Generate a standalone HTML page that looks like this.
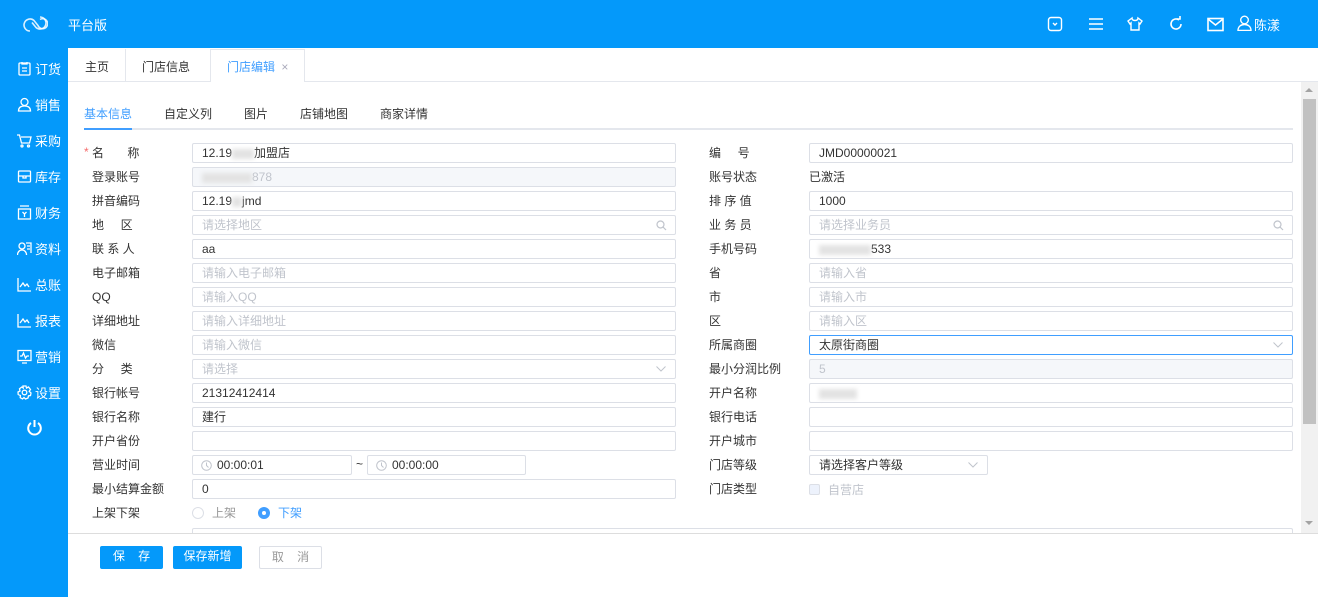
<!DOCTYPE html>
<html><head><meta charset="utf-8">
<style>
*{box-sizing:border-box;margin:0;padding:0}
body{width:1318px;height:597px;overflow:hidden;position:relative;background:#fff;font-family:"Liberation Sans","Noto Sans CJK SC",sans-serif;font-size:12px;color:#333}
.a{position:absolute}
.hdr{left:0;top:0;width:1318px;height:48px;background:#0499fa}
.side{left:0;top:48px;width:68px;height:549px;background:#0499fa}
.si{position:absolute;left:17px;color:#fff;font-size:13px;display:flex;align-items:center;gap:3px}
.si svg{width:15px;height:15px}
.lbl{position:absolute;font-size:12px;color:#333;line-height:20px}
.in{position:absolute;height:20px;border:1px solid #dcdfe6;border-radius:2px;background:#fff;padding-left:9px;line-height:18px;font-size:12px;color:#333}
.ph{color:#c0c4cc}
.dis{background:#f5f7fa;color:#c0c4cc}
.blur{display:inline-block;width:30px;height:10px;background:#e3e3e3;vertical-align:middle;filter:blur(2px)}
.btn{position:absolute;top:546px;height:23px;line-height:21px;text-align:center;border-radius:2px;font-size:12px}
.chev{position:absolute;right:9px;top:6px;width:10px;height:6px}
</style></head><body>
<div class="a hdr"></div>
<svg class="a" style="left:22px;top:14px" width="26" height="20" viewBox="0 0 26 20"><path d="M8 17a6 6 0 1 1 4-10.5l4 5a5 5 0 1 0 2-6" fill="none" stroke="#fff" stroke-width="1.6" opacity=".85"/><path d="M18 3a6 6 0 1 1-4 10.5l-4-5" fill="none" stroke="#fff" stroke-width="1.6" opacity=".85"/></svg>
<div class="a" style="left:68px;top:15px;color:#fff;font-size:13px">平台版</div>
<svg class="a" style="left:1047px;top:16px" width="16" height="16" viewBox="0 0 16 16" fill="none" stroke="#fff" stroke-width="1.4"><rect x="1.5" y="1.5" width="13" height="13" rx="2.5"/><path d="M6 7l2 2 2-2"/></svg>
<svg class="a" style="left:1088px;top:16px" width="16" height="16" viewBox="0 0 16 16" stroke="#fff" stroke-width="1.6"><path d="M1 3h14M1 8h14M1 13h14"/></svg>
<svg class="a" style="left:1127px;top:16px" width="16" height="16" viewBox="0 0 16 16" fill="none" stroke="#fff" stroke-width="1.4"><path d="M5 2L1 5l2 3 1-1v7h8V7l1 1 2-3-4-3c0 1.5-1 2.5-3 2.5S5 3.5 5 2z"/></svg>
<svg class="a" style="left:1168px;top:16px" width="16" height="16" viewBox="0 0 16 16" fill="none" stroke="#fff" stroke-width="1.6"><path d="M13 8a5 5 0 1 1-2-4"/><path d="M9 3h3V0" /></svg>
<svg class="a" style="left:1207px;top:17px" width="17" height="15" viewBox="0 0 17 15" fill="none" stroke="#fff" stroke-width="1.6"><rect x="1" y="1.5" width="15" height="12"/><path d="M1 2l7.5 6L16 2"/></svg>
<svg class="a" style="left:1237px;top:15px" width="15" height="16" viewBox="0 0 15 16" fill="none" stroke="#fff" stroke-width="1.4"><circle cx="7.5" cy="5" r="3.8"/><path d="M1 15.5c0-4 3-6 6.5-6s6.5 2 6.5 6z"/></svg>
<div class="a" style="left:1254px;top:15px;color:#fff;font-size:13px">陈漾</div>

<div class="a side"></div>
<div class="si" style="top:59px"><svg viewBox="0 0 15 15" fill="none" stroke="#fff" stroke-width="1.3"><rect x="2" y="2" width="11" height="12" rx="1"/><path d="M5 1v2h5V1M5 7h5M5 10h5"/></svg>订货</div>
<div class="si" style="top:95px"><svg viewBox="0 0 15 15" fill="none" stroke="#fff" stroke-width="1.3"><circle cx="7.5" cy="5" r="3.5"/><path d="M1.5 14c0-3.5 2.5-5 6-5s6 1.5 6 5z"/></svg>销售</div>
<div class="si" style="top:131px"><svg viewBox="0 0 15 15" fill="none" stroke="#fff" stroke-width="1.3"><path d="M0 2h2.5l2 8h8l1.5-6H4"/><circle cx="5" cy="13" r="1"/><circle cx="11.5" cy="13" r="1"/></svg>采购</div>
<div class="si" style="top:167px"><svg viewBox="0 0 15 15" fill="none" stroke="#fff" stroke-width="1.3"><rect x="1.5" y="2" width="12" height="11" rx="1"/><path d="M1.5 7h12M6 7v2h3V7"/></svg>库存</div>
<div class="si" style="top:203px"><svg viewBox="0 0 15 15" fill="none" stroke="#fff" stroke-width="1.3"><rect x="1.5" y="4" width="12" height="10"/><path d="M3 1h9M5.5 7l2 2 2-2M7.5 9v3"/></svg>财务</div>
<div class="si" style="top:239px"><svg viewBox="0 0 15 15" fill="none" stroke="#fff" stroke-width="1.3"><circle cx="5" cy="5" r="3"/><path d="M0.5 14c0-3 2-5 4.5-5s4.5 2 4.5 5M9 2h5v10M10 5h3M10 8h3"/></svg>资料</div>
<div class="si" style="top:275px"><svg viewBox="0 0 15 15" fill="none" stroke="#fff" stroke-width="1.3"><path d="M1 1v13h13M3 10l3-4 2 3 2-2 2 3"/></svg>总账</div>
<div class="si" style="top:311px"><svg viewBox="0 0 15 15" fill="none" stroke="#fff" stroke-width="1.3"><path d="M1 1v13h13M3 10l3-4 2 3 2-2 2 3"/></svg>报表</div>
<div class="si" style="top:347px"><svg viewBox="0 0 15 15" fill="none" stroke="#fff" stroke-width="1.3"><rect x="1" y="1.5" width="13" height="10"/><path d="M3 7h2l1.5-3 2 5 1.5-2h2M5 14h5"/></svg>营销</div>
<div class="si" style="top:383px"><svg viewBox="0 0 15 15" fill="none" stroke="#fff" stroke-width="1.3"><circle cx="7.5" cy="7.5" r="2.3"/><path d="M6 1h3l.5 2 2-1 2 2.5-1.3 1.8L14 8l-.5 2.5-2 .3-.5 2.2-2.5 1-1.5-1.5L5.5 14l-2.3-1.3.2-2.2L1.2 9.5 1 7l2-1-.5-2.2L4.8 2 6.2 3z"/></svg>设置</div>
<svg class="a" style="left:26px;top:419px" width="17" height="17" viewBox="0 0 17 17" fill="none" stroke="#fff" stroke-width="2"><path d="M5 4a6.3 6.3 0 1 0 7 0M8.5 1v7"/></svg>

<div class="a" style="left:68px;top:81px;width:1250px;height:1px;background:#e4e7ed"></div>
<div class="a" style="left:125px;top:49px;width:1px;height:32px;background:#e4e7ed"></div>
<div class="a" style="left:210px;top:49px;width:95px;height:33px;border:1px solid #e4e7ed;border-bottom:none;background:#fff"></div>
<div class="a" style="left:85px;top:58px;font-size:12px">主页</div>
<div class="a" style="left:142px;top:58px;font-size:12px">门店信息</div>
<div class="a" style="left:227px;top:58px;font-size:12px;color:#409eff">门店编辑 <span style="color:#aab;margin-left:3px">×</span></div>

<div class="a" style="left:84px;top:105px;color:#409eff">基本信息</div>
<div class="a" style="left:164px;top:105px">自定义列</div>
<div class="a" style="left:244px;top:105px">图片</div>
<div class="a" style="left:300px;top:105px">店铺地图</div>
<div class="a" style="left:380px;top:105px">商家详情</div>
<div class="a" style="left:84px;top:128px;width:1209px;height:2px;background:#e4e7ed"></div>
<div class="a" style="left:84px;top:128px;width:48px;height:2px;background:#409eff"></div>

<div class="a" style="left:1301px;top:82px;width:17px;height:451px;background:#f1f1f1"></div>
<div class="a" style="left:1303px;top:99px;width:13px;height:325px;background:#c1c1c1"></div>
<div class="a" style="left:1305px;top:88px;border:4px solid transparent;border-bottom:4px solid #a3a3a3;border-top:none;width:0"></div>
<div class="a" style="left:1305px;top:521px;border:4px solid transparent;border-top:4px solid #a3a3a3;border-bottom:none;width:0"></div>

<div class="a" style="left:84px;top:145px;color:#f56c6c">*</div>
<div class="lbl" style="left:92px;top:143px">名&nbsp;&nbsp;&nbsp;&nbsp;&nbsp;&nbsp;&nbsp;称</div>
<div class="in" style="left:192px;top:143px;width:484px">12.19<span class="blur" style="width:22px"></span>加盟店</div>
<div class="lbl" style="left:92px;top:167px">登录账号</div>
<div class="in dis" style="left:192px;top:167px;width:484px"><span class="blur" style="width:50px"></span>878</div>
<div class="lbl" style="left:92px;top:191px">拼音编码</div>
<div class="in" style="left:192px;top:191px;width:484px">12.19<span class="blur" style="width:10px"></span>jmd</div>
<div class="lbl" style="left:92px;top:215px">地&nbsp;&nbsp;&nbsp;&nbsp;&nbsp;区</div>
<div class="in ph" style="left:192px;top:215px;width:484px">请选择地区<svg style="position:absolute;right:8px;top:4px" width="11" height="11" viewBox="0 0 11 11" fill="none" stroke="#c0c4cc" stroke-width="1.2"><circle cx="4.5" cy="4.5" r="3.5"/><path d="M7 7l3 3"/></svg></div>
<div class="lbl" style="left:92px;top:239px">联 系 人</div>
<div class="in" style="left:192px;top:239px;width:484px">aa</div>
<div class="lbl" style="left:92px;top:263px">电子邮箱</div>
<div class="in ph" style="left:192px;top:263px;width:484px">请输入电子邮箱</div>
<div class="lbl" style="left:92px;top:287px">QQ</div>
<div class="in ph" style="left:192px;top:287px;width:484px">请输入QQ</div>
<div class="lbl" style="left:92px;top:311px">详细地址</div>
<div class="in ph" style="left:192px;top:311px;width:484px">请输入详细地址</div>
<div class="lbl" style="left:92px;top:335px">微信</div>
<div class="in ph" style="left:192px;top:335px;width:484px">请输入微信</div>
<div class="lbl" style="left:92px;top:359px">分&nbsp;&nbsp;&nbsp;&nbsp;&nbsp;类</div>
<div class="in ph" style="left:192px;top:359px;width:484px">请选择<svg class="chev" viewBox="0 0 10 6" fill="none" stroke="#c0c4cc"><path d="M0.5 0.5l4.5 4.5 4.5-4.5"/></svg></div>
<div class="lbl" style="left:92px;top:383px">银行帐号</div>
<div class="in" style="left:192px;top:383px;width:484px">21312412414</div>
<div class="lbl" style="left:92px;top:407px">银行名称</div>
<div class="in" style="left:192px;top:407px;width:484px">建行</div>
<div class="lbl" style="left:92px;top:431px">开户省份</div>
<div class="in" style="left:192px;top:431px;width:484px"></div>
<div class="lbl" style="left:92px;top:455px">营业时间</div>
<div class="in" style="left:192px;top:455px;width:160px;padding-left:24px">00:00:01<svg style="position:absolute;left:8px;top:4px" width="11" height="11" viewBox="0 0 11 11" fill="none" stroke="#c0c4cc"><circle cx="5.5" cy="5.5" r="4.8"/><path d="M5.5 2.5v3l2 2"/></svg></div>
<div class="a" style="left:356px;top:457px">~</div>
<div class="in" style="left:367px;top:455px;width:159px;padding-left:24px">00:00:00<svg style="position:absolute;left:8px;top:4px" width="11" height="11" viewBox="0 0 11 11" fill="none" stroke="#c0c4cc"><circle cx="5.5" cy="5.5" r="4.8"/><path d="M5.5 2.5v3l2 2"/></svg></div>
<div class="lbl" style="left:92px;top:479px">最小结算金额</div>
<div class="in" style="left:192px;top:479px;width:484px">0</div>
<div class="lbl" style="left:92px;top:503px">上架下架</div>
<div class="a" style="left:192px;top:507px;width:12px;height:12px;border:1px solid #dcdfe6;border-radius:50%"></div>
<div class="a" style="left:212px;top:504px;color:#999">上架</div>
<div class="a" style="left:258px;top:507px;width:12px;height:12px;background:#409eff;border-radius:50%"><div style="margin:4px;width:4px;height:4px;background:#fff;border-radius:50%"></div></div>
<div class="a" style="left:278px;top:504px;color:#409eff">下架</div>
<div class="in" style="left:192px;top:528px;width:1101px;height:10px;border-bottom:none"></div>

<div class="lbl" style="left:709px;top:143px">编&nbsp;&nbsp;&nbsp;&nbsp;&nbsp;号</div>
<div class="in" style="left:809px;top:143px;width:484px">JMD00000021</div>
<div class="lbl" style="left:709px;top:167px">账号状态</div>
<div class="lbl" style="left:809px;top:167px">已激活</div>
<div class="lbl" style="left:709px;top:191px">排 序 值</div>
<div class="in" style="left:809px;top:191px;width:484px">1000</div>
<div class="lbl" style="left:709px;top:215px">业 务 员</div>
<div class="in ph" style="left:809px;top:215px;width:484px">请选择业务员<svg style="position:absolute;right:8px;top:4px" width="11" height="11" viewBox="0 0 11 11" fill="none" stroke="#c0c4cc" stroke-width="1.2"><circle cx="4.5" cy="4.5" r="3.5"/><path d="M7 7l3 3"/></svg></div>
<div class="lbl" style="left:709px;top:239px">手机号码</div>
<div class="in" style="left:809px;top:239px;width:484px"><span class="blur" style="width:52px"></span>533</div>
<div class="lbl" style="left:709px;top:263px">省</div>
<div class="in ph" style="left:809px;top:263px;width:484px">请输入省</div>
<div class="lbl" style="left:709px;top:287px">市</div>
<div class="in ph" style="left:809px;top:287px;width:484px">请输入市</div>
<div class="lbl" style="left:709px;top:311px">区</div>
<div class="in ph" style="left:809px;top:311px;width:484px">请输入区</div>
<div class="lbl" style="left:709px;top:335px">所属商圈</div>
<div class="in" style="left:809px;top:335px;width:484px;border-color:#409eff">太原街商圈<svg class="chev" viewBox="0 0 10 6" fill="none" stroke="#c0c4cc"><path d="M0.5 0.5l4.5 4.5 4.5-4.5"/></svg></div>
<div class="lbl" style="left:709px;top:359px">最小分润比例</div>
<div class="in dis" style="left:809px;top:359px;width:484px">5</div>
<div class="lbl" style="left:709px;top:383px">开户名称</div>
<div class="in" style="left:809px;top:383px;width:484px"><span class="blur" style="width:38px"></span></div>
<div class="lbl" style="left:709px;top:407px">银行电话</div>
<div class="in" style="left:809px;top:407px;width:484px"></div>
<div class="lbl" style="left:709px;top:431px">开户城市</div>
<div class="in" style="left:809px;top:431px;width:484px"></div>
<div class="lbl" style="left:709px;top:455px">门店等级</div>
<div class="in" style="left:809px;top:455px;width:179px">请选择客户等级<svg class="chev" viewBox="0 0 10 6" fill="none" stroke="#c0c4cc"><path d="M0.5 0.5l4.5 4.5 4.5-4.5"/></svg></div>
<div class="lbl" style="left:709px;top:479px">门店类型</div>
<div class="a" style="left:809px;top:484px;width:11px;height:11px;border:1px solid #dcdfe6;background:#edf2fc;border-radius:2px"></div>
<div class="a" style="left:828px;top:481px;color:#c0c4cc">自营店</div>

<div class="a" style="left:68px;top:533px;width:1250px;height:64px;background:#fff;border-top:1px solid #ddd"></div>
<div class="btn" style="left:100px;width:63px;background:#0499fa;color:#fff">保&nbsp;&nbsp;&nbsp;&nbsp;存</div>
<div class="btn" style="left:173px;width:69px;background:#0499fa;color:#fff">保存新增</div>
<div class="btn" style="left:259px;width:63px;border:1px solid #dcdfe6;color:#999">取&nbsp;&nbsp;&nbsp;&nbsp;消</div>
</body></html>
